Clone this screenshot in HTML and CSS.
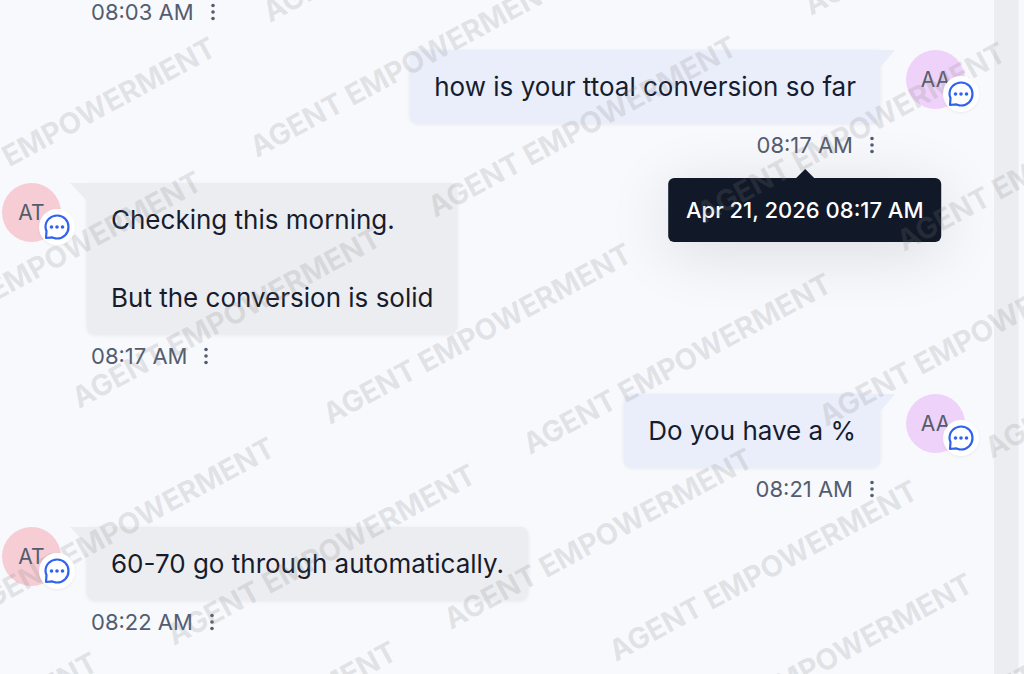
FILE: index.html
```html
<!DOCTYPE html>
<html lang="en">
	<head>
		<meta charset="UTF-8" />
		<meta name="viewport" content="width=device-width, initial-scale=1.0" />
		<title>Messages</title>
		<link rel="stylesheet" href="styles.css">
	</head>
	<body>
		<!-- shared icons -->
		<svg class="icon-defs" aria-hidden="true">
			<symbol id="icon-chat" viewBox="0 0 26 26">
				<path d="M2 24 L2.5 17 C1.8 15.500 1.500 14.300 1.500 13 C1.500 6.500 6.700 1.500 13.200 1.500 C19.600 1.500 24.500 6.600 24.500 13 C24.500 19.500 19.500 24.500 13 24.500 C11.200 24.500 9.600 23.800 8.200 23.400 Z" fill="none" stroke="currentColor" stroke-width="2.200" stroke-linejoin="round" />
				<circle cx="7.500" cy="13" r="1.800" fill="currentColor" />
				<circle cx="13" cy="13" r="1.800" fill="currentColor" />
				<circle cx="18.500" cy="13" r="1.800" fill="currentColor" />
			</symbol>
			<symbol id="icon-dots" viewBox="0 0 16 18">
				<circle cx="8" cy="2.500" r="1.800" fill="currentColor" />
				<circle cx="8" cy="9" r="1.800" fill="currentColor" />
				<circle cx="8" cy="15.500" r="1.800" fill="currentColor" />
			</symbol>
		</svg>

		<div class="container">
			<main class="messages">
				<div class="message received">
					<div class="content">
						<div class="meta">
							<time>08:03 AM</time>
							<button class="menu" aria-label="Message options"><svg><use href="#icon-dots" /></svg></button>
						</div>
					</div>
				</div>

				<div class="message sent">
					<div class="avatar">AA<span class="badge"><svg><use href="#icon-chat" /></svg></span></div>
					<div class="content">
						<div class="bubble">how is your ttoal conversion so far</div>
						<div class="meta">
							<time>08:17 AM<span class="tooltip" role="tooltip">Apr 21, 2026 08:17 AM</span></time>
							<button class="menu" aria-label="Message options"><svg><use href="#icon-dots" /></svg></button>
						</div>
					</div>
				</div>

				<div class="message received">
					<div class="avatar">AT<span class="badge"><svg><use href="#icon-chat" /></svg></span></div>
					<div class="content">
						<div class="bubble">Checking this morning.<br><br>But the conversion is solid</div>
						<div class="meta">
							<time>08:17 AM</time>
							<button class="menu" aria-label="Message options"><svg><use href="#icon-dots" /></svg></button>
						</div>
					</div>
				</div>

				<div class="message sent">
					<div class="avatar">AA<span class="badge"><svg><use href="#icon-chat" /></svg></span></div>
					<div class="content">
						<div class="bubble">Do you have a %</div>
						<div class="meta">
							<time>08:21 AM</time>
							<button class="menu" aria-label="Message options"><svg><use href="#icon-dots" /></svg></button>
						</div>
					</div>
				</div>

				<div class="message received">
					<div class="avatar">AT<span class="badge"><svg><use href="#icon-chat" /></svg></span></div>
					<div class="content">
						<div class="bubble">60-70 go through automatically.</div>
						<div class="meta">
							<time>08:22 AM</time>
							<button class="menu" aria-label="Message options"><svg><use href="#icon-dots" /></svg></button>
						</div>
					</div>
				</div>
			</main>
			<div class="scroll-track"></div>
		</div>

		<svg class="watermark" aria-hidden="true">
			<text transform="translate(270 23) rotate(-28.4)">AGENT EMPOWERMENT</text>
			<text transform="translate(811 16) rotate(-28.4)">AGENT EMPOWERMENT</text>
			<text transform="translate(-86 219) rotate(-28.4)">AGENT EMPOWERMENT</text>
			<text transform="translate(257 158) rotate(-28.4)">AGENT EMPOWERMENT</text>
			<text transform="translate(435 218) rotate(-28.4)">AGENT EMPOWERMENT</text>
			<text transform="translate(704 224) rotate(-28.4)">AGENT EMPOWERMENT</text>
			<text transform="translate(904 252) rotate(-28.4)">AGENT EMPOWERMENT</text>
			<text transform="translate(-100 353) rotate(-28.4)">AGENT EMPOWERMENT</text>
			<text transform="translate(79 409) rotate(-28.4)">AGENT EMPOWERMENT</text>
			<text transform="translate(330 425) rotate(-28.4)">AGENT EMPOWERMENT</text>
			<text transform="translate(530 455) rotate(-28.4)">AGENT EMPOWERMENT</text>
			<text transform="translate(826 427) rotate(-28.4)">AGENT EMPOWERMENT</text>
			<text transform="translate(992 459) rotate(-28.4)">AGENT EMPOWERMENT</text>
			<text transform="translate(-299 613) rotate(-28.4)">AGENT EMPOWERMENT</text>
			<text transform="translate(-27 619) rotate(-28.4)">AGENT EMPOWERMENT</text>
			<text transform="translate(174 646) rotate(-28.4)">AGENT EMPOWERMENT</text>
			<text transform="translate(451 630) rotate(-28.4)">AGENT EMPOWERMENT</text>
			<text transform="translate(616 662) rotate(-28.4)">AGENT EMPOWERMENT</text>
			<text transform="translate(671 755) rotate(-28.4)">AGENT EMPOWERMENT</text>
			<text transform="translate(95 823) rotate(-28.4)">AGENT EMPOWERMENT</text>
			<text transform="translate(-204 834) rotate(-28.4)">AGENT EMPOWERMENT</text>
			<text transform="translate(950 729) rotate(-28.4)">AGENT EMPOWERMENT</text>
		</svg>
	</body>
</html>
```
FILE: styles.css
```css
* {
	box-sizing: border-box;
}
body {
	margin: 0;
	overflow: hidden;
	font-family: Inter, "Liberation Sans", sans-serif;
	font-size: 26px;
	line-height: 39px;
	background-color: #f8f9fd;
	color: #161c2d;
}
.icon-defs {
	display: none;
}
.container {
	display: flex;
	height: 100vh;
	padding-right: 5px;
}
.messages {
	flex: 1;
	display: flex;
	flex-direction: column;
	gap: 20px;
	margin-top: -10px;
	padding: 0 29px 0 2px;
}
.scroll-track {
	width: 25px;
	background-color: #ecedf1;
	border-right: 1px solid #f1f2f5;
}
.message {
	display: flex;
	align-items: flex-start;
	gap: 26px;
}
.message.sent {
	flex-direction: row-reverse;
}
.message:first-child {
	padding-left: 85px;
}
.content {
	display: flex;
	flex-direction: column;
	align-items: flex-start;
}
.sent .content {
	align-items: flex-end;
}
.bubble {
	position: relative;
	padding: 17px 24px;
	background-color: #ecedf0;
	border-radius: 8px;
	border-top-left-radius: 0;
	box-shadow: 0 1px 4px rgba(0, 0, 0, 0.08);
}
.sent .bubble {
	background-color: #eaeefb;
	border-radius: 8px;
	border-top-right-radius: 0;
}
.bubble::before {
	content: "";
	position: absolute;
	top: 0;
	right: 100%;
	width: 17px;
	height: 18px;
	background-color: inherit;
	clip-path: polygon(0 0, 100% 0, 100% 100%);
}
.sent .bubble::before {
	right: auto;
	left: 100%;
	width: 15px;
	clip-path: polygon(0 0, 100% 0, 0 100%);
}
.avatar {
	position: relative;
	width: 59px;
	height: 59px;
	border-radius: 50%;
	background-color: #f6cdd4;
	color: #545c6c;
	font-size: 21px;
	line-height: 60px;
	text-align: center;
}
.sent .avatar {
	background-color: #efd2f9;
}
.badge {
	position: absolute;
	right: -14px;
	bottom: -3px;
	z-index: 2;
	display: flex;
	align-items: center;
	justify-content: center;
	width: 36px;
	height: 36px;
	border-radius: 50%;
	background-color: white;
	color: #2f62ee;
	box-shadow: 0 1px 3px rgba(0, 0, 0, 0.06);
}
.badge svg {
	width: 26px;
	height: 26px;
}
.meta {
	display: flex;
	align-items: center;
	gap: 11px;
	margin-top: 4px;
	padding-left: 4px;
	font-size: 22px;
	line-height: 36px;
	color: #545d6f;
}
.meta time {
	position: relative;
}
.menu {
	display: flex;
	padding: 0;
	border: none;
	background: none;
	color: inherit;
	cursor: pointer;
}
.menu svg {
	width: 16px;
	height: 18px;
}
.tooltip {
	position: absolute;
	top: 51px;
	left: 50%;
	transform: translateX(-50%);
	padding: 14px 18px;
	border-radius: 6px;
	background-color: #111827;
	color: white;
	font-weight: 500;
	white-space: nowrap;
	box-shadow: 0 10px 64px rgba(0, 0, 0, 0.12);
}
.tooltip::before {
	content: "";
	position: absolute;
	bottom: 100%;
	left: 50%;
	margin-left: -9px;
	border: 9px solid transparent;
	border-top: none;
	border-bottom-color: #111827;
}
.watermark {
	position: absolute;
	top: 0;
	left: 0;
	z-index: 1;
	width: 100%;
	height: 100%;
	pointer-events: none;
	font-size: 29px;
	font-weight: 700;
	fill: rgba(128, 128, 128, 0.19);
}
```
